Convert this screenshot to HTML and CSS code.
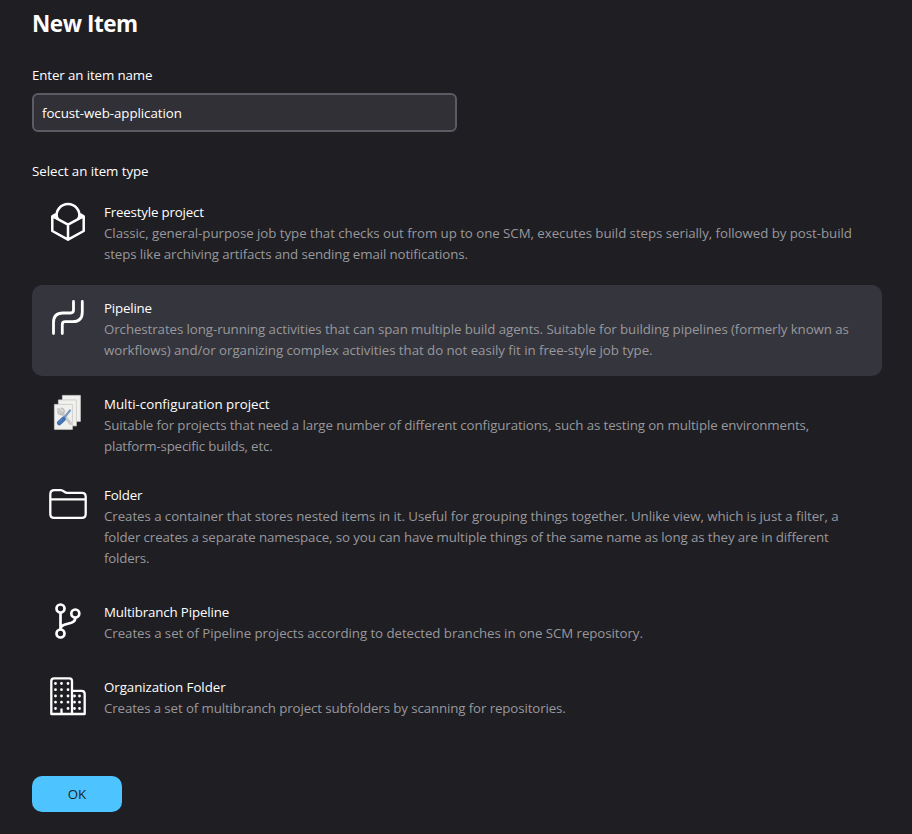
FILE: index.html
```html
<!DOCTYPE html>
<html lang="en">
<head>
<meta charset="utf-8">
<title>New Item</title>
<link rel="stylesheet" href="styles.css">
</head>
<body>
<main class="page">
  <h1 class="heading">New Item</h1>
  <label class="label t10" for="name">Enter an item name</label>
  <input class="name-input" id="name" type="text" value="focust-web-application" spellcheck="false">
  <div class="label type-label t5">Select an item type</div>
  <ul class="items">
    <li class="item">
      <svg class="icon" viewBox="0 0 48 48" fill="none" stroke="#fff" stroke-width="2.5" stroke-linejoin="round"><path d="M12.800 20.500a11.400 11.400 0 1 1 22.400 0"/><path d="M12 17l-3.700 2.200v14.800L24 42.700l15.700-8.700v-14.800L36 17M8.300 19.200L24 27.700l15.700-8.500M24 27.700v15M12.500 18q.2 2 1.500 4M35.500 18q-.2 2-1.500 4"/></svg>
      <div><div class="title t18">Freestyle project</div>
      <p class="desc"><span class="t5">Classic, general-purpose job type that checks out from up to one SCM, executes build steps serially, followed by post-build</span><br><span class="t11">steps like archiving artifacts and sending email notifications.</span></p></div>
    </li>
    <li class="item selected">
      <svg class="icon" viewBox="0 0 48 48" fill="none" stroke="#fff" stroke-width="2.800" stroke-linecap="round"><path d="M9.500 40.500V29.500Q9.500 20 19 20h7.500Q29.500 20 29.500 17V8.500M18.300 40.500v-9Q18.300 28.700 21.300 28.700h7.500Q38.300 28.700 38.300 19V8.500"/></svg>
      <div><div class="title t18">Pipeline</div>
      <p class="desc"><span class="t8">Orchestrates long-running activities that can span multiple build agents. Suitable for building pipelines (formerly known as</span><br><span class="t5">workflows) and/or organizing complex activities that do not easily fit in free-style job type.</span></p></div>
    </li>
    <li class="item joined">
      <svg class="icon" viewBox="0 0 48 48"><g fill="#f0f0ee" stroke="#c6c7c4" stroke-width=".8"><path d="M18.400 6.400h18v26h-18z"/><path d="M14.400 10.900h18v26h-18z"/><path d="M10.400 15.400h18v25h-18z"/></g><path d="M14.500 20.500l3 3M17.500 23.500l9 11" stroke="#c9cbc9" stroke-width="3.200" stroke-linecap="round"/><path d="M13.800 22.500q.5 4 4.500 2.700l2-2.500q-.5-3.500-3.500-3.500" fill="none" stroke="#b9bcba" stroke-width="1.500"/><path d="M26 21.500l-6.500 8" stroke="#789ac0" stroke-width="2.200" stroke-linecap="round"/><path d="M19.500 30l-4.300 4" stroke="#3f72b4" stroke-width="4.600" stroke-linecap="round"/><path d="M18.300 30l-3.500 3.500" stroke="#6792c7" stroke-width="1"/></svg>
      <div><div class="title">Multi-configuration project</div>
      <p class="desc"><span class="t10">Suitable for projects that need a large number of different configurations, such as testing on multiple environments,</span><br><span class="t18">platform-specific builds, etc.</span></p></div>
    </li>
    <li class="item">
      <svg class="icon" viewBox="0 0 48 48" fill="none" stroke="#fff" stroke-width="2.300" stroke-linejoin="round"><path d="M6.300 14.500Q6.300 10.200 10.500 10.200h6q2 0 3.300 1.200t3.200 1.400H38Q41.700 12.800 41.700 16.500V34Q41.700 37.800 38 37.800H10Q6.300 37.800 6.300 34zM6.300 19.300h35.400"/></svg>
      <div><div class="title t18">Folder</div>
      <p class="desc"><span class="t6">Creates a container that stores nested items in it. Useful for grouping things together. Unlike view, which is just a filter, a</span><br><span class="t10">folder creates a separate namespace, so you can have multiple things of the same name as long as they are in different</span><br><span class="t18">folders.</span></p></div>
    </li>
    <li class="item joined branch">
      <svg class="icon" viewBox="0 0 48 48" fill="none" stroke="#fff" stroke-width="2.700"><circle cx="16.500" cy="11.500" r="4"/><circle cx="31.300" cy="16.500" r="4"/><circle cx="16.500" cy="36.500" r="4"/><path d="M16.500 15.500v17M31.300 20.500q0 4-4 5.300l-7 2q-3.800 1.200-3.800 4.700"/></svg>
      <div><div class="title t15">Multibranch Pipeline</div>
      <p class="desc"><span class="t6">Creates a set of Pipeline projects according to detected branches in one SCM repository.</span></p></div>
    </li>
    <li class="item">
      <svg class="icon" viewBox="0 0 48 48" fill="none" stroke="#fff" stroke-width="2.300" stroke-linejoin="round"><path d="M7.300 42V9Q7.300 6.300 10 6.300h15.500Q28 6.300 28 9v33zM28 18.800h9.500q3.200 0 3.200 3.200v20H28M17.500 42v-5.500"/><g stroke-width="2.800" stroke-linecap="round"><path d="M11.500 11.500h.01M17.500 11.500h.01M24 11.500h.01M11.500 17.700h.01M17.500 17.700h.01M24 17.700h.01M11.500 24h.01M17.500 24h.01M24 24h.01M11.500 30.200h.01M17.500 30.200h.01M24 30.200h.01M11.500 36.500h.01M24 36.500h.01M30.500 24h.01M35.500 24h.01M30.500 30.200h.01M35.500 30.200h.01M30.500 36.500h.01M35.500 36.500h.01"/></g></svg>
      <div><div class="title t5">Organization Folder</div>
      <p class="desc"><span class="t11">Creates a set of multibranch project subfolders by scanning for repositories.</span></p></div>
    </li>
  </ul>
  <button class="ok" type="button">OK</button>
</main>
</body>
</html>
```
FILE: styles.css
```css
* { box-sizing: border-box; }
body {
  margin: 0;
  min-height: 834px;
  background: #1f1e23;
  color: #fff;
  font: 13.3px/21px "Open Sans", "Noto Sans", sans-serif;
}
.page { padding: 8px 30px 0 32px; }
.heading { margin: 0; font-size: 22.500px; line-height: 32px; font-weight: 700; letter-spacing: -.45px; }
.label { display: block; margin-top: 25px; }
.name-input {
  display: block;
  width: 425px;
  height: 39px;
  margin-top: 7px;
  padding: 0 8px;
  border: 2px solid #5b5b66;
  border-radius: 6px;
  background: #303036;
  color: #fff;
  font: inherit;
  letter-spacing: -.05px;
  outline: none;
}
.type-label { margin-top: 29px; }
.items { list-style: none; margin: 7px 0 0; padding: 0; }
.item {
  display: flex;
  gap: 12px;
  margin-bottom: 5px;
  padding: 13px 12px 15px;
  border-radius: 10px;
}
.selected { background: #35353d; }
.joined { margin-bottom: 0; }
.branch { padding-bottom: 19px; }
.icon { flex: none; width: 48px; height: 48px; margin: -5px 0 0; }
.desc { margin: 0; color: #98989c; white-space: nowrap; }

/* tracking steps */
.t5 { letter-spacing: -.05px; }
.t6 { letter-spacing: -.065px; }
.t8 { letter-spacing: -.082px; }
.t10 { letter-spacing: -.103px; }
.t11 { letter-spacing: -.113px; }
.t15 { letter-spacing: -.15px; }
.t18 { letter-spacing: -.18px; }

.ok {
  display: block;
  width: 90px;
  height: 36px;
  margin-top: 41px;
  border: 0;
  border-radius: 10px;
  background: #4dc4ff;
  color: #1f1e23;
  font: inherit;
}
```
